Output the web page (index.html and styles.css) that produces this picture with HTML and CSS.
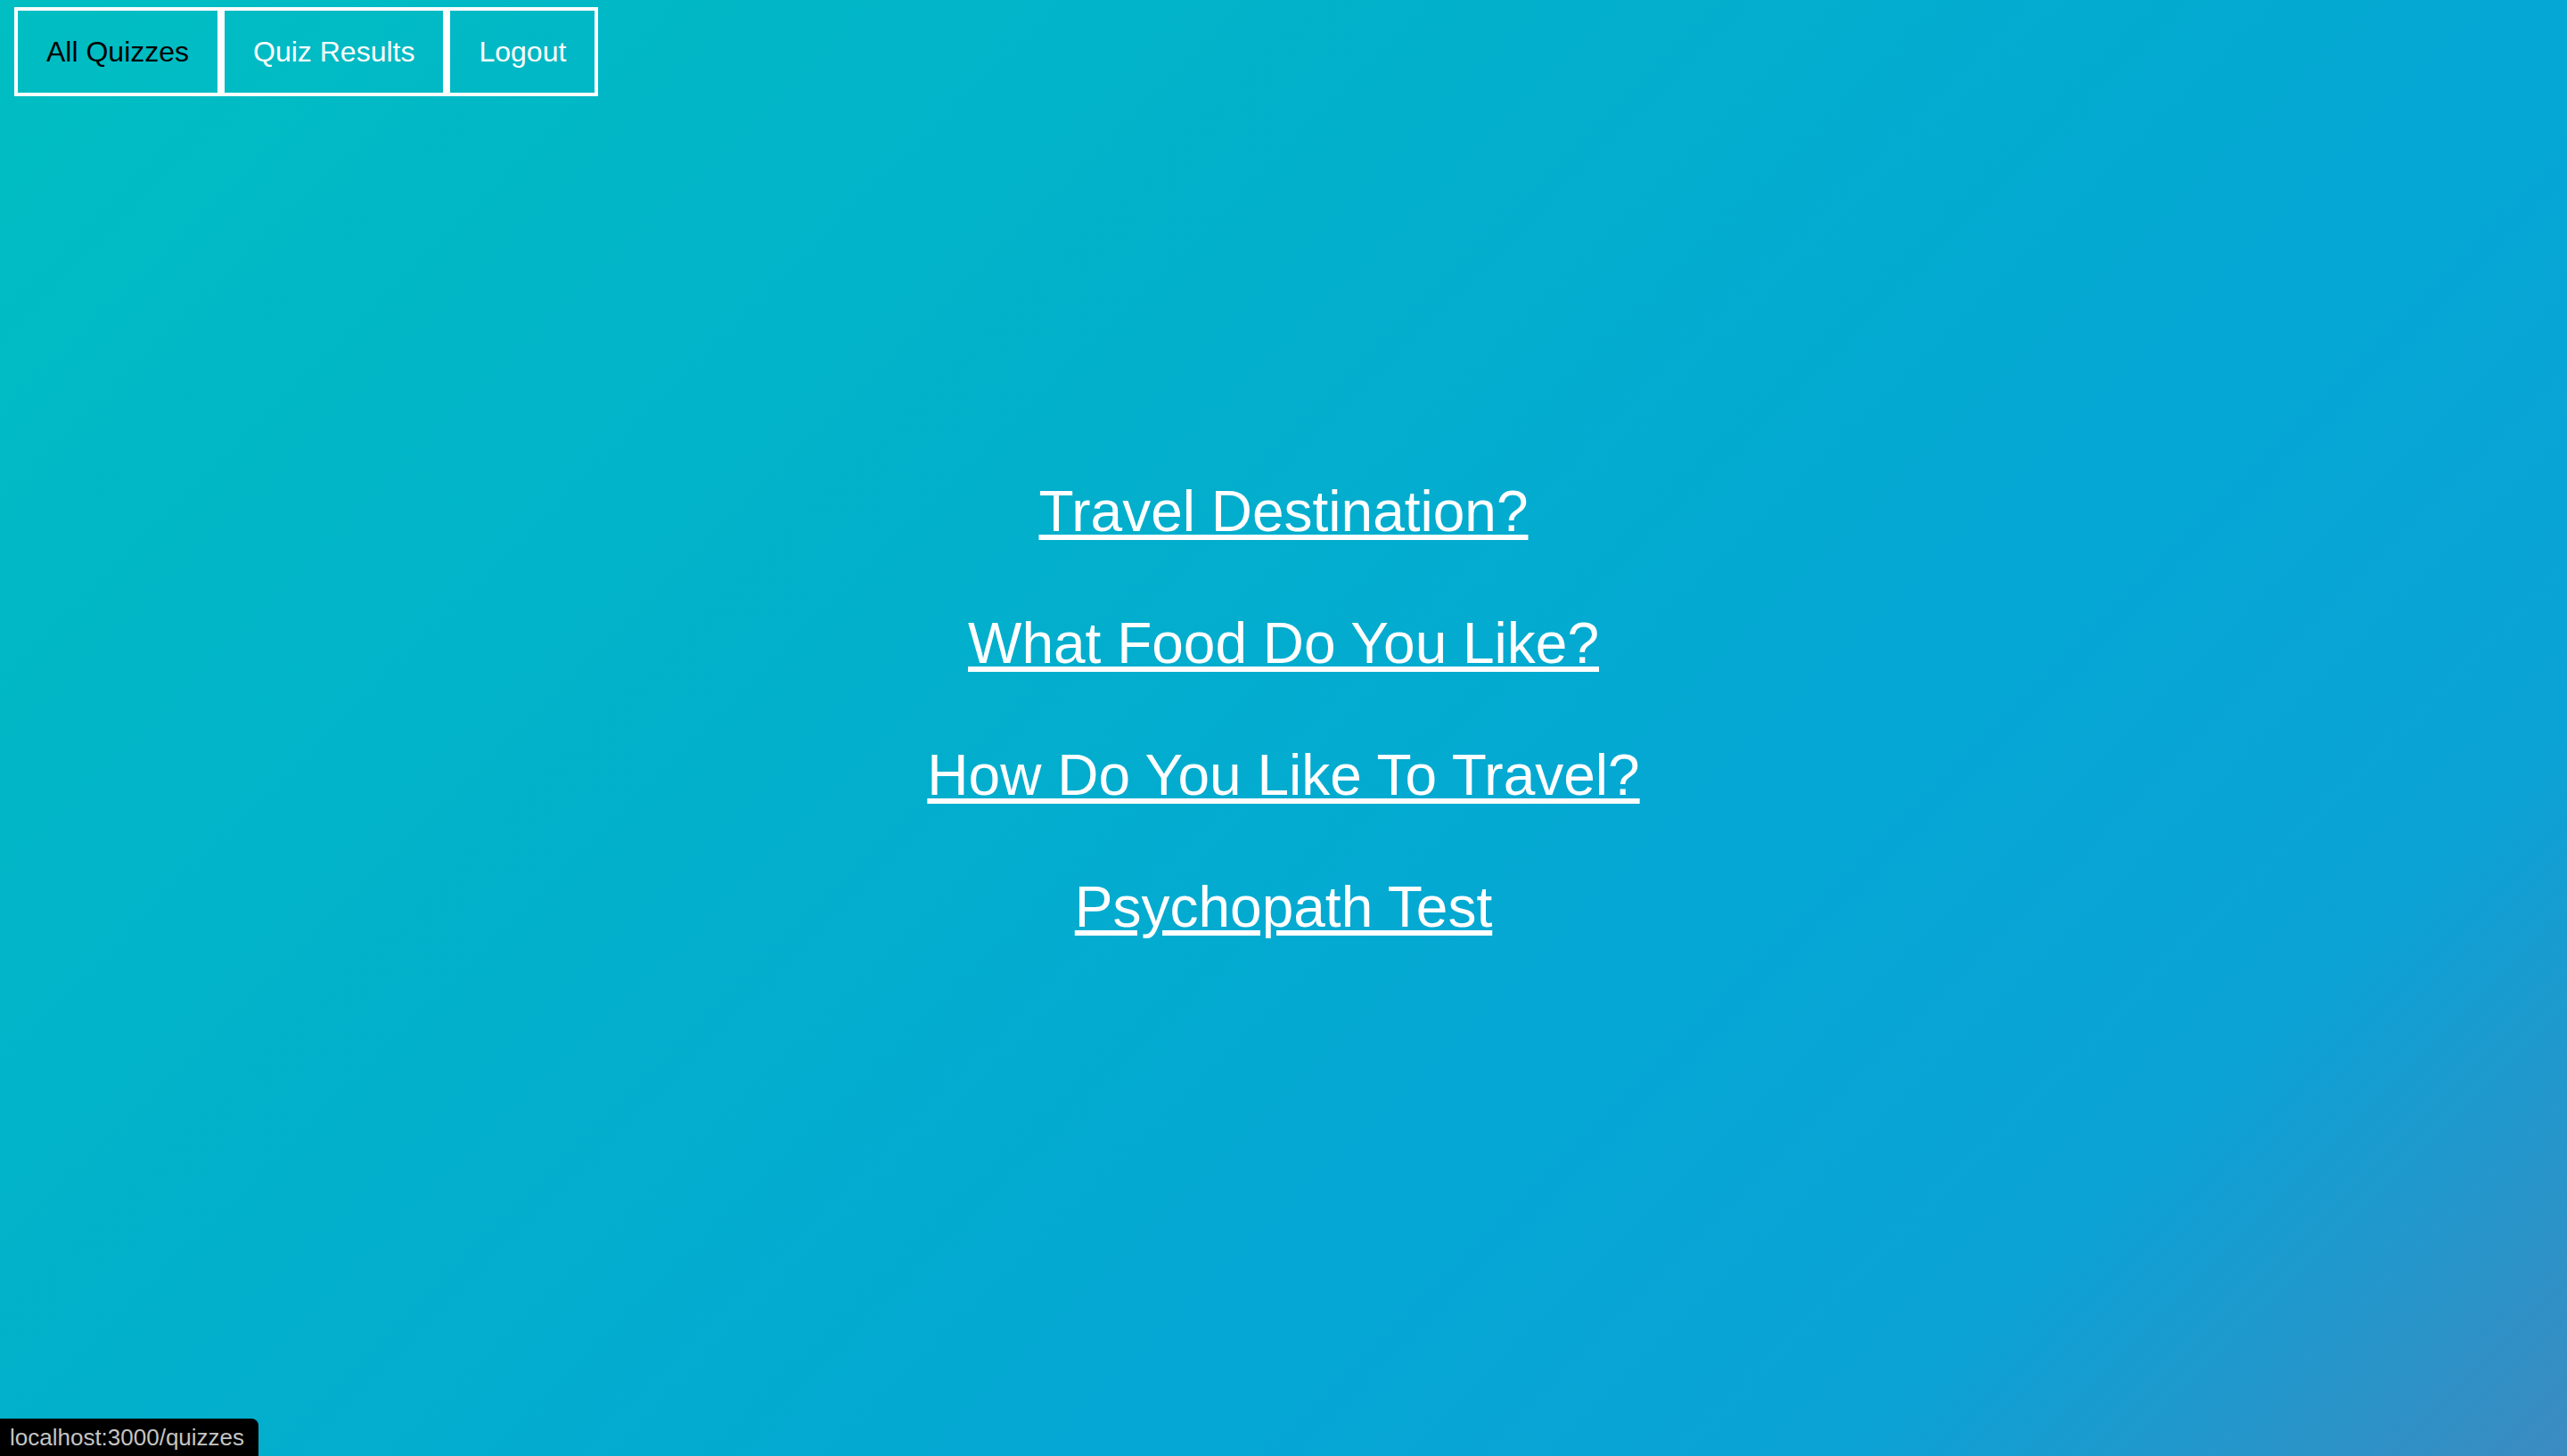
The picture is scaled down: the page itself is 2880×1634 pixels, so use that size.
FILE: index.html
```html
<!DOCTYPE html>
<html lang="en">
<head>
<meta charset="utf-8">
<title>Quizzes</title>
<link rel="stylesheet" href="styles.css">
</head>
<body>
<nav class="nav">
  <a class="nav-btn active" href="#">All Quizzes</a>
  <a class="nav-btn" href="#">Quiz Results</a>
  <a class="nav-btn" href="#">Logout</a>
</nav>
<main class="quiz-list">
  <a class="quiz-link" href="#">Travel Destination?</a>
  <a class="quiz-link" href="#">What Food Do You Like?</a>
  <a class="quiz-link" href="#">How Do You Like To Travel?</a>
  <a class="quiz-link" href="#">Psychopath Test</a>
</main>
<div class="status-bubble">localhost:3000/quizzes</div>
</body>
</html>
```
FILE: styles.css
```css
html, body {
  margin: 0;
  padding: 0;
  height: 100%;
}
body {
  font-family: "Liberation Sans", Arial, sans-serif;
  background: linear-gradient(135deg, #00bec2 0%, #02afcc 40%, #05a6d5 68%, #0ba2d5 82%, #3c8bc1 100%);
  min-height: 100vh;
  overflow: hidden;
}
.nav {
  display: flex;
  margin: 8px 16px 0;
}
.nav-btn {
  display: block;
  border: 4px solid #ffffff;
  padding: 28px 32px;
  font-size: 32px;
  line-height: 36px;
  color: #ffffff;
  text-decoration: none;
}
.nav-btn.active {
  color: #000000;
}
.quiz-list {
  display: flex;
  flex-direction: column;
  align-items: center;
  gap: 74px;
  padding-top: 429px;
}
.quiz-link {
  font-size: 64px;
  line-height: 74px;
  color: #ffffff;
  text-decoration: underline;
}
.status-bubble {
  position: fixed;
  left: 0;
  bottom: 0;
  height: 42px;
  box-sizing: border-box;
  padding: 0 16px 0 11px;
  background: #000000;
  border-top-right-radius: 8px;
  color: #c4c4c4;
  font-size: 26px;
  line-height: 42px;
}
```
